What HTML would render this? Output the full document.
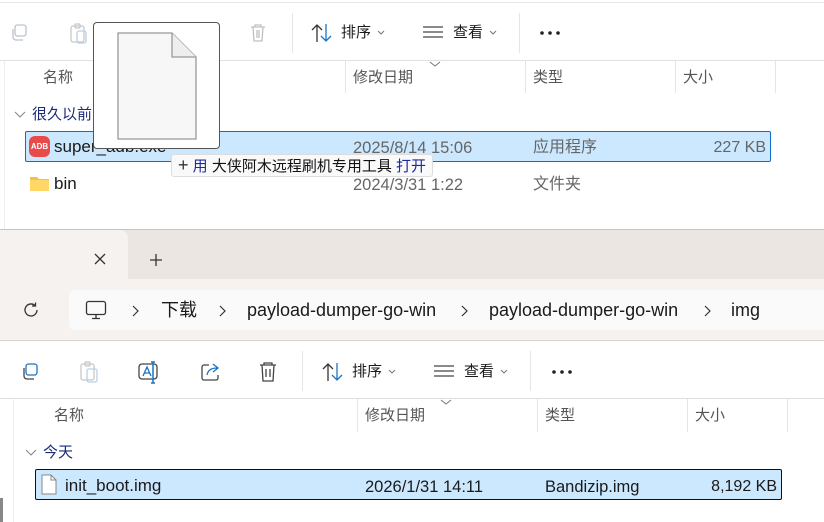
<!DOCTYPE html><html><head><meta charset="utf-8"><style>
*{margin:0;padding:0;box-sizing:border-box}
body{width:824px;height:522px;overflow:hidden;background:#fff;position:relative;font-family:"Liberation Sans","Noto Sans CJK SC",sans-serif;font-size:15px;color:#1a1a1a;line-height:18px}
.a{position:absolute;white-space:nowrap}
.g{color:#666}
.hd{color:#555;font-size:15px}
.vl{position:absolute;width:1px;background:#e5e5e5}
.hl{position:absolute;height:1px;background:#e0e0e0}
.cv{display:inline-block;vertical-align:middle;margin-left:4px}
</style></head><body>
<!-- top window -->
<div class="hl" style="left:0;top:2px;width:824px;background:#e6e6e6"></div>
<svg class="a" style="left:8px;top:22px" width="22" height="22" viewBox="0 0 22 22" fill="none" stroke="#b8c4d0" stroke-width="1.3"><rect x="7" y="3" width="11" height="11" rx="2.5"/><path d="M5 7v8a3 3 0 0 0 3 3h7"/></svg>
<svg class="a" style="left:68px;top:22px" width="22" height="22" viewBox="0 0 22 22" fill="none" stroke="#c8c8c8" stroke-width="1.3"><rect x="3" y="4" width="13" height="16" rx="2"/><rect x="7" y="2" width="5" height="4" rx="1"/><rect x="9" y="9" width="9" height="12" rx="2" stroke="#b8d0e8"/></svg>
<svg class="a" style="left:248px;top:22px" width="20" height="22" viewBox="0 0 20 22" fill="none" stroke="#c0c0c0" stroke-width="1.3"><path d="M3 5h14M7 5V3h6v2M5 5l1 14h8l1-14M9 8v8M11 8v8"/></svg>
<div class="vl" style="left:292px;top:13px;height:40px"></div>
<svg class="a" style="left:310px;top:22px" width="24" height="22" viewBox="0 0 24 22" fill="none" stroke="#333" stroke-width="1.3"><path d="M7 20V3M2 8l5-5 5 5"/><path d="M16 2v17M11 14l5 5 5-5" stroke="#1a73c8"/></svg>
<div class="a" style="left:341px;top:24px">排序<svg class="cv" width="12" height="8"><path d="M3 2l3 3 3-3" fill="none" stroke="#777"/></svg></div>
<svg class="a" style="left:422px;top:25px" width="22" height="16"><path d="M1 2h20M1 7h20M1 12h20" stroke="#444" stroke-width="1.2"/></svg>
<div class="a" style="left:453px;top:24px">查看<svg class="cv" width="12" height="8"><path d="M3 2l3 3 3-3" fill="none" stroke="#777"/></svg></div>
<div class="vl" style="left:519px;top:13px;height:40px"></div>
<svg class="a" style="left:539px;top:30px" width="24" height="6"><circle cx="3" cy="3" r="1.8" fill="#222"/><circle cx="11" cy="3" r="1.8" fill="#222"/><circle cx="19" cy="3" r="1.8" fill="#222"/></svg>
<div class="hl" style="left:0;top:60px;width:824px"></div>
<div class="vl" style="left:4px;top:61px;height:168px;background:#eee"></div>
<div class="a hd" style="left:43px;top:69px">名称</div>
<div class="vl" style="left:345px;top:61px;height:32px"></div>
<div class="a hd" style="left:353px;top:69px">修改日期</div>
<svg class="a" style="left:429px;top:61px" width="12" height="7"><path d="M1 1l5 4 5-4" fill="none" stroke="#777"/></svg>
<div class="vl" style="left:525px;top:61px;height:32px"></div>
<div class="a hd" style="left:533px;top:69px">类型</div>
<div class="vl" style="left:675px;top:61px;height:32px"></div>
<div class="a hd" style="left:683px;top:69px">大小</div>
<div class="vl" style="left:775px;top:61px;height:32px"></div>
<svg class="a" style="left:14px;top:111px" width="12" height="8"><path d="M1 1l5 5 5-5" fill="none" stroke="#888" stroke-width="1.1"/></svg>
<div class="a" style="left:32px;top:106px;color:#1b2a7a">很久以前</div>
<div class="a" style="left:25px;top:131px;width:746px;height:31px;background:#cce8ff;border:1px solid #0f6fc6;border-radius:2px"></div>
<div class="a" style="left:29px;top:136px;width:21px;height:21px;border-radius:6px;background:#e94b4b;color:#fff;font-size:8px;font-weight:bold;text-align:center;line-height:21px">ADB</div>
<div class="a" style="left:54px;top:138px;font-size:17px">super_adb.exe</div>
<div class="a g" style="left:353px;top:139px;font-size:16.5px">2025/8/14 15:06</div>
<div class="a g" style="left:533px;top:139px;font-size:16px">应用程序</div>
<div class="a g" style="right:58px;top:139px;font-size:16px">227 KB</div>
<svg class="a" style="left:30px;top:175px" width="19" height="16"><path d="M0 2h7l2 2h10v12H0z" fill="#f4c04d"/><path d="M0 5h19v11H0z" fill="#ffd766"/></svg>
<div class="a" style="left:54px;top:175px;font-size:17px">bin</div>
<div class="a g" style="left:353px;top:176px;font-size:16.5px">2024/3/31 1:22</div>
<div class="a g" style="left:533px;top:176px;font-size:16px">文件夹</div>
<!-- drag ghost -->
<div class="a" style="left:93px;top:22px;width:127px;height:127px;background:#fff;border:1.5px solid #555;border-radius:4px"></div>
<svg class="a" style="left:117px;top:32px" width="80" height="108"><path d="M1 1h54l24 24v82H1z" fill="#f7f7f7" stroke="#999" stroke-width="1.3"/><path d="M55 1v24h24" fill="#eee" stroke="#999" stroke-width="1.3"/></svg>
<div class="a" style="left:171px;top:154px;height:23px;padding:0 6px;background:#f9f9f9;border:1px solid #ddd;border-radius:3px;line-height:21px;color:#1b2aa0;font-size:15px"><span style="color:#333;font-size:18px">+</span> 用 <span style="color:#111">大侠阿木远程刷机专用工具</span> 打开</div>
<!-- bottom window -->
<div class="a" style="left:0;top:229px;width:824px;height:112px;background:#ebe6e2"></div>
<div class="hl" style="left:0;top:229px;width:824px;background:#c8c4c0"></div>
<div class="a" style="left:0;top:230px;width:128px;height:50px;background:#f5f2f0;border-radius:0 8px 0 0"></div>
<div class="a" style="left:0;top:279px;width:824px;height:62px;background:#f5f2f0"></div>
<div class="hl" style="left:0;top:340px;width:824px;background:#d8d4d0"></div>
<svg class="a" style="left:93px;top:252px" width="14" height="14"><path d="M2 2l10 10M12 2L2 12" stroke="#333" stroke-width="1.3"/></svg>
<svg class="a" style="left:149px;top:253px" width="14" height="14"><path d="M7 1v12M1 7h12" stroke="#333" stroke-width="1.3"/></svg>
<svg class="a" style="left:22px;top:301px" width="18" height="18" fill="none" stroke="#333" stroke-width="1.3"><path d="M15 9a6 6 0 1 1-2-4.5"/><path d="M13.5 1.5v3.5h-3.5"/></svg>
<div class="a" style="left:69px;top:290px;width:755px;height:40px;background:#fbfafa;border-radius:6px 0 0 6px"></div>
<svg class="a" style="left:85px;top:300px" width="22" height="20" fill="none" stroke="#333" stroke-width="1.3"><rect x="1.5" y="1.5" width="19" height="13" rx="2"/><path d="M11 15v3M7 18.5h8"/></svg>
<svg class="a" style="left:131px;top:305px" width="8" height="12"><path d="M2 1l5 5-5 5" fill="none" stroke="#333" stroke-width="1.2"/></svg>
<div class="a" style="left:161px;top:300px;font-size:18px;line-height:20px">下载</div>
<svg class="a" style="left:218px;top:305px" width="8" height="12"><path d="M2 1l5 5-5 5" fill="none" stroke="#333" stroke-width="1.2"/></svg>
<div class="a" style="left:247px;top:300px;font-size:18px;line-height:20px">payload-dumper-go-win</div>
<svg class="a" style="left:460px;top:305px" width="8" height="12"><path d="M2 1l5 5-5 5" fill="none" stroke="#333" stroke-width="1.2"/></svg>
<div class="a" style="left:489px;top:300px;font-size:18px;line-height:20px">payload-dumper-go-win</div>
<svg class="a" style="left:703px;top:305px" width="8" height="12"><path d="M2 1l5 5-5 5" fill="none" stroke="#333" stroke-width="1.2"/></svg>
<div class="a" style="left:731px;top:300px;font-size:18px;line-height:20px">img</div>
<svg class="a" style="left:19px;top:361px" width="22" height="22" fill="none" stroke-width="1.3"><rect x="7" y="3" width="11" height="11" rx="2.5" stroke="#1a73c8"/><path d="M5 7v8a3 3 0 0 0 3 3h7" stroke="#444"/></svg>
<svg class="a" style="left:79px;top:360px" width="22" height="24" fill="none" stroke="#c8c8c8" stroke-width="1.3"><rect x="2" y="4" width="13" height="16" rx="2"/><rect x="6" y="2" width="5" height="4" rx="1"/><rect x="8" y="9" width="10" height="13" rx="2" stroke="#b8d0e8"/></svg>
<svg class="a" style="left:137px;top:360px" width="24" height="24" fill="none" stroke-width="1.3"><rect x="2" y="4" width="18" height="15" rx="3" stroke="#444"/><path d="M6 16l4-9 4 9M7.5 13h5" stroke="#1a73c8"/><path d="M16 2v21M14 2h4M14 23h4" stroke="#1a73c8" stroke-width="1.5"/></svg>
<svg class="a" style="left:199px;top:360px" width="24" height="24" fill="none" stroke-width="1.3"><path d="M10 5H5a2 2 0 0 0-2 2v11a2 2 0 0 0 2 2h12a2 2 0 0 0 2-2v-3" stroke="#444"/><path d="M8 15c1-5 5-7 10-7M14 4l5 4-5 4" stroke="#1a73c8"/></svg>
<svg class="a" style="left:258px;top:360px" width="20" height="24" fill="none" stroke="#444" stroke-width="1.3"><path d="M2 5h16M6 5V3h8v2M4 5l1 16h10l1-16M8 9v8M12 9v8"/></svg>
<div class="vl" style="left:302px;top:351px;height:40px"></div>
<svg class="a" style="left:321px;top:361px" width="24" height="22" fill="none" stroke="#333" stroke-width="1.3"><path d="M7 20V3M2 8l5-5 5 5"/><path d="M16 2v17M11 14l5 5 5-5" stroke="#1a73c8"/></svg>
<div class="a" style="left:352px;top:363px">排序<svg class="cv" width="12" height="8"><path d="M3 2l3 3 3-3" fill="none" stroke="#777"/></svg></div>
<svg class="a" style="left:433px;top:364px" width="22" height="16"><path d="M1 2h20M1 7h20M1 12h20" stroke="#444" stroke-width="1.2"/></svg>
<div class="a" style="left:464px;top:363px">查看<svg class="cv" width="12" height="8"><path d="M3 2l3 3 3-3" fill="none" stroke="#777"/></svg></div>
<div class="vl" style="left:530px;top:351px;height:40px"></div>
<svg class="a" style="left:551px;top:369px" width="24" height="6"><circle cx="3" cy="3" r="1.8" fill="#222"/><circle cx="11" cy="3" r="1.8" fill="#222"/><circle cx="19" cy="3" r="1.8" fill="#222"/></svg>
<div class="hl" style="left:0;top:398px;width:824px"></div>
<div class="vl" style="left:13px;top:399px;height:123px;background:#eee"></div>
<div class="a" style="left:0;top:498px;width:3px;height:24px;background:#888"></div>
<div class="a hd" style="left:54px;top:407px">名称</div>
<div class="vl" style="left:357px;top:399px;height:33px"></div>
<div class="a hd" style="left:365px;top:407px">修改日期</div>
<svg class="a" style="left:440px;top:399px" width="12" height="7"><path d="M1 1l5 4 5-4" fill="none" stroke="#777"/></svg>
<div class="vl" style="left:537px;top:399px;height:33px"></div>
<div class="a hd" style="left:545px;top:407px">类型</div>
<div class="vl" style="left:687px;top:399px;height:33px"></div>
<div class="a hd" style="left:695px;top:407px">大小</div>
<div class="vl" style="left:787px;top:399px;height:33px"></div>
<svg class="a" style="left:25px;top:449px" width="12" height="8"><path d="M1 1l5 5 5-5" fill="none" stroke="#888" stroke-width="1.1"/></svg>
<div class="a" style="left:43px;top:444px;color:#1b2a7a">今天</div>
<div class="a" style="left:35px;top:469px;width:747px;height:31px;background:#cce8ff;border:1.5px solid #111;border-radius:2px"></div>
<svg class="a" style="left:41px;top:474px" width="16" height="21"><path d="M1 1h9l5 5v14H1z" fill="#fff" stroke="#888"/><path d="M10 1v5h5" fill="none" stroke="#888"/></svg>
<div class="a" style="left:65px;top:477px;font-size:17px">init_boot.img</div>
<div class="a" style="left:365px;top:478px;font-size:16.5px">2026/1/31 14:11</div>
<div class="a" style="left:545px;top:478px;font-size:16.5px">Bandizip.img</div>
<div class="a" style="right:47px;top:478px;font-size:16px">8,192 KB</div>
</body></html>
